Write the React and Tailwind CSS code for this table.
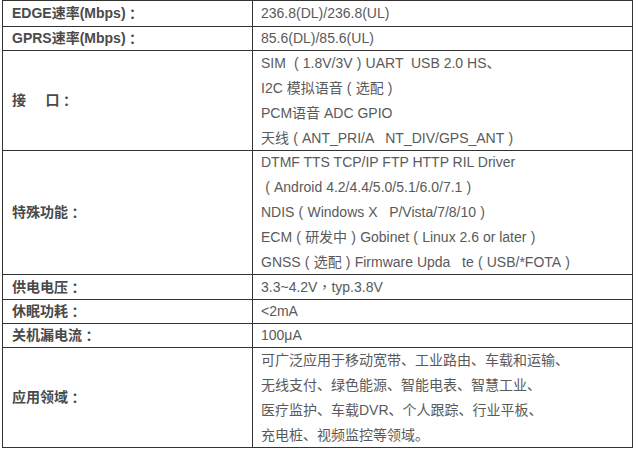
import React from 'react';

const rows = [
    { label: 'EDGE速率(Mbps)：', h: 'h-[25px]', lines: ['236.8(DL)/236.8(UL)'] },
    { label: 'GPRS速率(Mbps)：', h: 'h-[24px]', lines: ['85.6(DL)/85.6(UL)'] },
    {
        label: '接     口：',
        h: 'h-[100px]',
        lines: [
            'SIM （1.8V/3V）UART  USB 2.0 HS、',
            'I2C 模拟语音（选配）',
            'PCM语音 ADC GPIO',
            '天线（ANT_PRI/A   NT_DIV/GPS_ANT）',
        ],
    },
    {
        label: '特殊功能：',
        h: 'h-[124px]',
        lines: [
            'DTMF TTS TCP/IP FTP HTTP RIL Driver',
            '（Android 4.2/4.4/5.0/5.1/6.0/7.1）',
            'NDIS（Windows X   P/Vista/7/8/10）',
            'ECM（研发中）Gobinet（Linux 2.6 or later）',
            'GNSS（选配）Firmware Upda   te（USB/*FOTA）',
        ],
    },
    { label: '供电电压：', h: 'h-[25px]', lines: ['3.3~4.2V，typ.3.8V'] },
    { label: '休眠功耗：', h: 'h-[24px]', lines: ['<2mA'] },
    { label: '关机漏电流：', h: 'h-[24px]', lines: ['100μA'] },
    {
        label: '应用领域：',
        h: 'h-[100px]',
        lines: [
            '可广泛应用于移动宽带、工业路由、车载和运输、',
            '无线支付、绿色能源、智能电表、智慧工业、',
            '医疗监护、车载DVR、个人跟踪、行业平板、',
            '充电桩、视频监控等领域。',
        ],
    },
];

// full-width punctuation sits centred in its box in the screenshot
const tc = { fontFamily: '"Noto Sans CJK TC", sans-serif' };

const renderText = (s) =>
    s.split(/([（），：])/).map((part, k) => {
        if (part === '（') return <span key={k} className="inline-block w-[13px] text-center">(</span>;
        if (part === '）') return <span key={k} className="inline-block w-[13px] text-center">)</span>;
        if (part === '：' || part === '，') return <span key={k} style={tc}>{part}</span>;
        return <React.Fragment key={k}>{part}</React.Fragment>;
    });

const App = () => {
    return (
        <div
            className="w-[636px] h-[457px] bg-white pl-[2px]"
            style={{ fontFamily: '"Liberation Sans", Arial, "Noto Sans CJK SC", sans-serif' }}
        >
            <div className="w-[631px] border border-[#333] text-[14px]">
                {rows.map((row, i) => (
                    <div key={i} className={`flex ${row.h} ${i > 0 ? 'border-t border-[#333]' : ''}`}>
                        {/* label cell */}
                        <div className="w-[250px] shrink-0 border-r border-[#333] pl-[9px] flex items-center font-bold text-[#4a4a4a] whitespace-pre">
                            {renderText(row.label)}
                        </div>
                        {/* value cell */}
                        <div className="flex-1 pl-[8px] flex flex-col justify-center text-[#5a5a5a] leading-[25px] whitespace-pre">
                            {row.lines.map((l, j) => (
                                <div key={j}>{renderText(l)}</div>
                            ))}
                        </div>
                    </div>
                ))}
            </div>
        </div>
    );
};

export default App;
